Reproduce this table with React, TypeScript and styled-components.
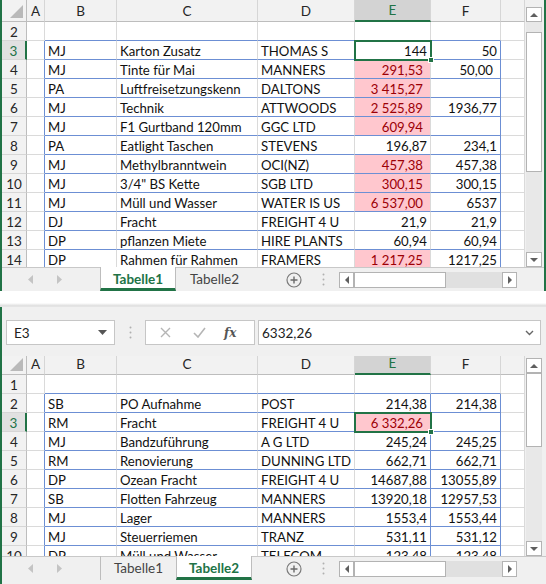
import React from "react";
import styled, { createGlobalStyle, css } from "styled-components";

const GREEN = "#217346";
const GRID = "#dadada";
const BLUE = "#6c8fd4";
const HEAD_BG = "#f2f2f2";
const PINK = "#ffc7ce";
const PINK_TEXT = "#9c0006";
const FONT = `Lato, "Open Sans", sans-serif`;

const Global = createGlobalStyle`
  html, body { margin: 0; padding: 0; background: #fff; }
  body { width: 546px; height: 584px; overflow: hidden; font-family: ${FONT}; }
  * { box-sizing: border-box; }
`;

type CellV = { v?: string; pink?: boolean };
type RowData = { n: number; b?: string; c?: string; d?: string; e?: CellV; f?: CellV & { pad?: boolean } };

const topRows: RowData[] = [
  { n: 2 },
  { n: 3, b: "MJ", c: "Karton Zusatz", d: "THOMAS S", e: { v: "144" }, f: { v: "50" } },
  { n: 4, b: "MJ", c: "Tinte für Mai", d: "MANNERS", e: { v: "291,53", pink: true }, f: { v: "50,00", pad: true } },
  { n: 5, b: "PA", c: "Luftfreisetzungskenn", d: "DALTONS", e: { v: "3 415,27", pink: true } },
  { n: 6, b: "MJ", c: "Technik", d: "ATTWOODS", e: { v: "2 525,89", pink: true }, f: { v: "1936,77" } },
  { n: 7, b: "MJ", c: "F1 Gurtband 120mm", d: "GGC LTD", e: { v: "609,94", pink: true } },
  { n: 8, b: "PA", c: "Eatlight Taschen", d: "STEVENS", e: { v: "196,87" }, f: { v: "234,1" } },
  { n: 9, b: "MJ", c: "Methylbranntwein", d: "OCI(NZ)", e: { v: "457,38", pink: true }, f: { v: "457,38" } },
  { n: 10, b: "MJ", c: "3/4\" BS Kette", d: "SGB LTD", e: { v: "300,15", pink: true }, f: { v: "300,15" } },
  { n: 11, b: "MJ", c: "Müll und Wasser", d: "WATER IS US", e: { v: "6 537,00", pink: true }, f: { v: "6537" } },
  { n: 12, b: "DJ", c: "Fracht", d: "FREIGHT 4 U", e: { v: "21,9" }, f: { v: "21,9" } },
  { n: 13, b: "DP", c: "pflanzen Miete", d: "HIRE PLANTS", e: { v: "60,94" }, f: { v: "60,94" } },
  { n: 14, b: "DP", c: "Rahmen für Rahmen", d: "FRAMERS", e: { v: "1 217,25", pink: true }, f: { v: "1217,25" } },
];

const bottomRows: RowData[] = [
  { n: 1 },
  { n: 2, b: "SB", c: "PO Aufnahme", d: "POST", e: { v: "214,38" }, f: { v: "214,38" } },
  { n: 3, b: "RM", c: "Fracht", d: "FREIGHT 4 U", e: { v: "6 332,26", pink: true } },
  { n: 4, b: "MJ", c: "Bandzuführung", d: "A G LTD", e: { v: "245,24" }, f: { v: "245,25" } },
  { n: 5, b: "RM", c: "Renovierung", d: "DUNNING LTD", e: { v: "662,71" }, f: { v: "662,71" } },
  { n: 6, b: "DP", c: "Ozean Fracht", d: "FREIGHT 4 U", e: { v: "14687,88" }, f: { v: "13055,89" } },
  { n: 7, b: "SB", c: "Flotten Fahrzeug", d: "MANNERS", e: { v: "13920,18" }, f: { v: "12957,53" } },
  { n: 8, b: "MJ", c: "Lager", d: "MANNERS", e: { v: "1553,4" }, f: { v: "1553,44" } },
  { n: 9, b: "MJ", c: "Steuerriemen", d: "TRANZ", e: { v: "531,11" }, f: { v: "531,12" } },
  { n: 10, b: "DP", c: "Müll und Wasser", d: "TELECOM", e: { v: "123,48" }, f: { v: "123,48" } },
];

/* ---------- layout ---------- */

const Page = styled.div`
  width: 546px;
  height: 584px;
  display: flex;
  flex-direction: column;
  background: #fff;
`;

const Window = styled.div<{ $h: number; $rightBorder?: boolean }>`
  height: ${(p) => p.$h}px;
  display: flex;
  flex-direction: column;
  border-left: 2px solid ${GREEN};
  border-right: ${(p) => (p.$rightBorder ? `2px solid ${GREEN}` : "none")};
  background: #f0f0f0;
  overflow: hidden;
`;

const Gap = styled.div`
  height: 16px;
  flex: 0 0 16px;
  background: linear-gradient(to bottom, #fff 0, #fff 12px, #dcdcdc 15px, #ececec 16px);
`;

const SheetArea = styled.div<{ $h: number }>`
  height: ${(p) => p.$h}px;
  flex: 0 0 ${(p) => p.$h}px;
  display: flex;
  overflow: hidden;
  background: #fff;
`;

const Grid = styled.div<{ $head: number }>`
  flex: 0 0 523px;
  display: grid;
  grid-template-columns: 25px 18px 72px 141px 97px 76px 70px 24px;
  grid-template-rows: ${(p) => p.$head}px;
  grid-auto-rows: 19px;
  align-content: start;
  overflow: hidden;
  font-family: ${FONT};
  font-size: 13.2px;
`;

const ColHead = styled.div<{ $sel?: boolean }>`
  display: flex;
  align-items: flex-end;
  justify-content: center;
  padding-bottom: 1px;
  background: ${HEAD_BG};
  color: #262626;
  border-right: 1px solid #d6d6d6;
  border-bottom: 1px solid #bdbdbd;
  line-height: 18px;
  font-size: 13.5px;
  ${(p) =>
    p.$sel &&
    css`
      background: #d3d3d3;
      color: ${GREEN};
      border-bottom: 2px solid ${GREEN};
    `}
`;

const Corner = styled(ColHead)`
  position: relative;
  border-right: 1px solid #bdbdbd;
`;

const CornerTri = styled.div`
  position: absolute;
  right: 3px;
  bottom: 3px;
  width: 13px;
  height: 13px;
  background: #b9b9b9;
  clip-path: polygon(100% 0, 100% 100%, 0 100%);
`;

const RowHead = styled.div<{ $sel?: boolean }>`
  display: flex;
  align-items: center;
  justify-content: center;
  padding-top: 1px;
  background: ${HEAD_BG};
  color: #262626;
  font-size: 13.5px;
  border-right: 1px solid #bdbdbd;
  border-bottom: 1px solid #d6d6d6;
  ${(p) =>
    p.$sel &&
    css`
      background: #e1e1e1;
      color: ${GREEN};
      border-right: 2px solid ${GREEN};
    `}
`;

const Cell = styled.div<{ $right?: boolean; $pink?: boolean; $bb?: string; $br?: string; $pad?: boolean; $sel?: boolean }>`
  position: relative;
  padding: 1px ${(p) => (p.$pink || p.$pad ? 7 : 3)}px 0 3px;
  line-height: 18px;
  white-space: nowrap;
  color: ${(p) => (p.$pink ? PINK_TEXT : "#111")};
  background: ${(p) => (p.$pink ? PINK : "#fff")};
  text-align: ${(p) => (p.$right ? "right" : "left")};
  border-right: 1px solid ${(p) => p.$br ?? GRID};
  border-bottom: 1px solid ${(p) => p.$bb ?? GRID};
  z-index: ${(p) => (p.$sel ? 2 : 0)};
`;

const SelFrame = styled.div`
  position: absolute;
  left: -1px;
  top: -1px;
  right: -2px;
  bottom: -2px;
  border: 2px solid ${GREEN};
  pointer-events: none;
`;

const SelHandle = styled.div`
  position: absolute;
  right: -4px;
  bottom: -4px;
  width: 6px;
  height: 6px;
  background: ${GREEN};
  border: 1px solid #fff;
`;

/* ---------- scrollbars ---------- */

const ScrollCol = styled.div<{ $top: number; $w: number }>`
  flex: 0 0 ${(p) => p.$w}px;
  padding: ${(p) => p.$top}px 0 0 1px;
  background: #f0f0f0;
  display: flex;
`;

const VBar = styled.div`
  width: 16px;
  display: flex;
  flex-direction: column;
  background: #e8e8e8;
`;

const HBar = styled.div`
  width: 178px;
  height: 16px;
  display: flex;
  background: #e0e0e0;
`;

const ArrowBox = styled.div`
  flex: 0 0 15px;
  width: 16px;
  height: 16px;
  background: #fff;
  border: 1px solid #b3b3b3;
  display: flex;
  align-items: center;
  justify-content: center;
`;

const HArrowBox = styled(ArrowBox)`
  width: 15px;
  height: 16px;
`;

const Track = styled.div`
  flex: 1;
  display: flex;
  flex-direction: column;
`;

const HTrack = styled.div`
  flex: 1;
  display: flex;
`;

const Thumb = styled.div`
  background: #fff;
  border: 1px solid #b3b3b3;
  flex: 0 0 auto;
`;

const Spacer = styled.div`
  flex: 0 0 auto;
`;

function Tri({ dir }: { dir: "up" | "down" | "left" | "right" }) {
  const pts = {
    up: "0,5 4,1 8,5",
    down: "0,1 4,5 8,1",
    left: "5,0 1,4 5,8",
    right: "1,0 5,4 1,8",
  }[dir];
  const vert = dir === "up" || dir === "down";
  return (
    <svg width={vert ? 8 : 6} height={vert ? 6 : 8} viewBox={vert ? "0 0 8 6" : "0 0 6 8"}>
      <polygon points={pts} fill="#5f5f5f" />
    </svg>
  );
}

function VScroll({ before, thumb }: { before: number; thumb: number }) {
  return (
    <VBar>
      <ArrowBox>
        <Tri dir="up" />
      </ArrowBox>
      <Track>
        <Spacer style={{ height: before }} />
        <Thumb style={{ height: thumb }} />
      </Track>
      <ArrowBox>
        <Tri dir="down" />
      </ArrowBox>
    </VBar>
  );
}

function HScroll() {
  return (
    <HBar>
      <HArrowBox>
        <Tri dir="left" />
      </HArrowBox>
      <HTrack>
        <Thumb style={{ width: 92 }} />
      </HTrack>
      <HArrowBox>
        <Tri dir="right" />
      </HArrowBox>
    </HBar>
  );
}

/* ---------- tab bar ---------- */

const TabBar = styled.div`
  flex: 0 0 24px;
  height: 24px;
  display: flex;
  align-items: stretch;
  background: #f0f0f0;
  border-top: 1px solid #c8c8c8;
  font-family: ${FONT};
  font-size: 13.5px;
`;

const Nav = styled.div`
  width: 98px;
  display: flex;
  align-items: center;
  gap: 22px;
  padding-left: 26px;
`;

const Tab = styled.div<{ $active?: boolean; $sepLeft?: boolean }>`
  width: 76px;
  display: flex;
  align-items: center;
  justify-content: center;
  margin-top: -1px;
  border-left: 1px solid ${(p) => (p.$active || p.$sepLeft ? "#bdbdbd" : "transparent")};
  ${(p) =>
    p.$active
      ? css`
          background: #fff;
          color: ${GREEN};
          font-weight: 700;
          border-right: 1px solid #bdbdbd;
          border-bottom: 3px solid ${GREEN};
          padding-top: 2px;
        `
      : css`
          color: #444;
        `}
`;

const TabSpacer = styled.div`
  width: 34px;
`;

const AddBtn = styled.div`
  width: 36px;
  display: flex;
  align-items: center;
`;

const Dots = styled.div`
  width: 17px;
  display: flex;
  align-items: center;
`;

const HScrollWrap = styled.div`
  display: flex;
  align-items: center;
`;

function TabStrip({ active }: { active: 1 | 2 }) {
  return (
    <TabBar>
      <Nav>
        <svg width="6" height="9" viewBox="0 0 6 9">
          <polygon points="5,0 0,4.5 5,9" fill="#c4c4c4" />
        </svg>
        <svg width="6" height="9" viewBox="0 0 6 9">
          <polygon points="1,0 6,4.5 1,9" fill="#c4c4c4" />
        </svg>
      </Nav>
      <Tab $active={active === 1} $sepLeft>
        Tabelle1
      </Tab>
      <Tab $active={active === 2}>Tabelle2</Tab>
      <TabSpacer />
      <AddBtn>
        <svg width="16" height="16" viewBox="0 0 16 16">
          <circle cx="8" cy="8" r="7" fill="none" stroke="#7a7a7a" strokeWidth="1.2" />
          <path d="M8 4.5v7M4.5 8h7" stroke="#6a6a6a" strokeWidth="1.4" />
        </svg>
      </AddBtn>
      <Dots>
        <svg width="3" height="13" viewBox="0 0 3 13">
          <circle cx="1.5" cy="1.5" r="1" fill="#b0b0b0" />
          <circle cx="1.5" cy="6.5" r="1" fill="#b0b0b0" />
          <circle cx="1.5" cy="11.5" r="1" fill="#b0b0b0" />
        </svg>
      </Dots>
      <HScrollWrap>
        <HScroll />
      </HScrollWrap>
    </TabBar>
  );
}

/* ---------- formula bar ---------- */

const FormulaBar = styled.div`
  flex: 0 0 49px;
  height: 49px;
  display: flex;
  align-items: flex-start;
  padding: 13px 0 0 4px;
  background: #f0f0f0;
  font-family: ${FONT};
  font-size: 13.5px;
  color: #222;
`;

const NameBox = styled.div`
  width: 109px;
  height: 25px;
  background: #fff;
  border: 1px solid #c6c6c6;
  display: flex;
  align-items: center;
  justify-content: space-between;
  padding: 0 7px 0 7px;
`;

const BarSep = styled.div`
  width: 30px;
  height: 25px;
  display: flex;
  align-items: center;
  justify-content: center;
`;

const FnBox = styled.div`
  width: 110px;
  height: 25px;
  background: #fff;
  border: 1px solid #c6c6c6;
  display: flex;
  align-items: center;
  padding-left: 14px;
  gap: 22px;
`;

const Fx = styled.span`
  font-family: "DejaVu Serif", "Liberation Serif", serif;
  font-style: italic;
  font-weight: 700;
  font-size: 12px;
  color: #555;
  margin-left: -4px;
`;

const FormulaInput = styled.div`
  width: 283px;
  height: 25px;
  margin-left: 3px;
  background: #fff;
  border: 1px solid #c6c6c6;
  display: flex;
  align-items: center;
  justify-content: space-between;
  padding: 0 6px 0 3px;
`;

/* ---------- sheet view ---------- */

type SheetProps = {
  head: number;
  height: number;
  rows: RowData[];
  selRow: number;
  tFrom: number;
  efBlue?: boolean;
  scrollTop: number;
  scrollW: number;
  thumbBefore: number;
  thumb: number;
};

function SheetView(p: SheetProps) {
  const cols = ["A", "B", "C", "D", "E", "F", ""];
  return (
    <SheetArea $h={p.height}>
      <Grid $head={p.head}>
        <Corner>
          <CornerTri />
        </Corner>
        {cols.map((c, i) => (
          <ColHead key={i} $sel={c === "E"}>
            {c}
          </ColHead>
        ))}
        {p.rows.map((r) => {
          const inT = r.n >= p.tFrom;
          const edge = r.n === p.tFrom - 1;
          const bb = inT || edge ? BLUE : undefined;
          const sel = r.n === p.selRow;
          return (
            <React.Fragment key={r.n}>
              <RowHead $sel={sel}>{r.n}</RowHead>
              <Cell $br={inT ? BLUE : undefined} />
              <Cell $bb={bb}>{r.b}</Cell>
              <Cell $bb={bb}>{r.c}</Cell>
              <Cell $bb={bb}>{r.d}</Cell>
              <Cell $bb={bb} $right $pink={r.e?.pink} $sel={sel} $br={inT && p.efBlue ? BLUE : undefined}>
                {r.e?.v}
                {sel && (
                  <SelFrame>
                    <SelHandle />
                  </SelFrame>
                )}
              </Cell>
              <Cell $bb={bb} $right $pad={r.f?.pad} $br={inT ? BLUE : undefined}>
                {r.f?.v}
              </Cell>
              <Cell />
            </React.Fragment>
          );
        })}
      </Grid>
      <ScrollCol $top={p.scrollTop} $w={p.scrollW}>
        <VScroll before={p.thumbBefore} thumb={p.thumb} />
      </ScrollCol>
    </SheetArea>
  );
}

export default function App() {
  return (
    <>
      <Global />
      <Page>
        <Window $h={291} $rightBorder>
          <SheetView
            head={22}
            height={267}
            rows={topRows}
            selRow={3}
            tFrom={3}
            scrollTop={7}
            scrollW={19}
            thumbBefore={10}
            thumb={140}
          />
          <TabStrip active={1} />
        </Window>
        <Gap />
        <Window $h={277}>
          <FormulaBar>
            <NameBox>
              <span>E3</span>
              <svg width="9" height="5" viewBox="0 0 9 5">
                <polygon points="0,0 9,0 4.5,5" fill="#555" />
              </svg>
            </NameBox>
            <BarSep>
              <svg width="3" height="13" viewBox="0 0 3 13">
                <circle cx="1.5" cy="1.5" r="1" fill="#b0b0b0" />
                <circle cx="1.5" cy="6.5" r="1" fill="#b0b0b0" />
                <circle cx="1.5" cy="11.5" r="1" fill="#b0b0b0" />
              </svg>
            </BarSep>
            <FnBox>
              <svg width="11" height="11" viewBox="0 0 11 11">
                <path d="M1 1l9 9M10 1l-9 9" stroke="#b5b5b5" strokeWidth="1.4" />
              </svg>
              <svg width="13" height="11" viewBox="0 0 13 11">
                <path d="M1 6l4 4 7-9" fill="none" stroke="#b5b5b5" strokeWidth="1.6" />
              </svg>
              <Fx>fx</Fx>
            </FnBox>
            <FormulaInput>
              <span>6332,26</span>
              <svg width="9" height="6" viewBox="0 0 9 6">
                <path d="M1 1l3.5 3.5L8 1" fill="none" stroke="#666" strokeWidth="1.4" />
              </svg>
            </FormulaInput>
          </FormulaBar>
          <SheetView
            head={19}
            height={200}
            rows={bottomRows}
            selRow={3}
            tFrom={2}
            efBlue
            scrollTop={2}
            scrollW={21}
            thumbBefore={0}
            thumb={74}
          />
          <TabStrip active={2} />
        </Window>
      </Page>
    </>
  );
}
